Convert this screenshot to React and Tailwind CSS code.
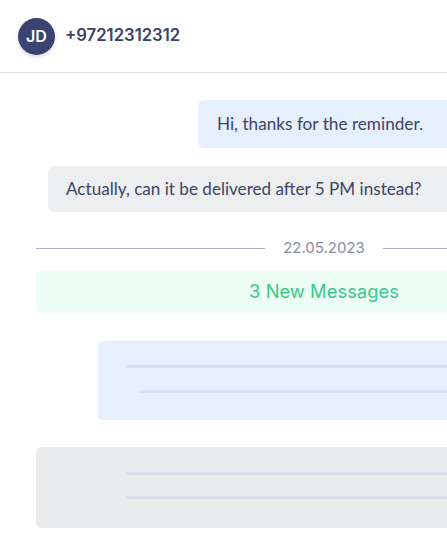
export default function App() {
  return (
    <div className="w-full h-[545px] overflow-hidden bg-white">
      <div className="w-[648px]">
        <div className="h-[73px] border-b border-[#dcdde2] flex items-center pl-[18px] gap-[10px]">
          <div className="w-[37px] h-[37px] rounded-full bg-[#3b4373] flex items-center justify-center text-white text-[16px] font-semibold shadow-[0_2px_4px_rgba(0,0,0,0.15)]" style={{ fontFamily: "Inter, sans-serif" }}>
            JD
          </div>
          <div className="text-[16.7px] font-semibold text-[#3b4268]" style={{ fontFamily: "Inter, sans-serif" }}>
            +97212312312
          </div>
        </div>
        <div className="px-[36px] pt-[27px] flex flex-col" style={{ fontFamily: "Lato, sans-serif" }}>
          <div className="ml-[162px] h-[48px] rounded-[6px] bg-[#e6effd] flex items-center pl-[19px] text-[17.2px] text-[#3d4466]">
            Hi, thanks for the reminder.
          </div>
          <div className="mt-[18px] ml-[12px] h-[46px] rounded-[6px] bg-[#eceef0] flex items-center pl-[18px] text-[17.1px] text-[#3d4466]">
            Actually, can it be delivered after 5 PM instead?
          </div>
          <div className="mt-[24px] h-[24px] flex items-center gap-[18px]">
            <div className="flex-1 h-px bg-[#a8acc0]" />
            <div className="text-[15px] text-[#8a8e9a]" style={{ fontFamily: "Inter, sans-serif" }}>22.05.2023</div>
            <div className="flex-1 h-px bg-[#a8acc0]" />
          </div>
          <div className="mt-[11px] h-[42px] rounded-[5px] bg-[#edfcf5] flex items-center justify-center text-[18.4px] text-[#3cc88a]" style={{ fontFamily: "Inter, sans-serif" }}>
            3 New Messages
          </div>
          <div className="mt-[28px] ml-[62px] h-[79px] rounded-[5px] bg-[#e6effd] flex flex-col pt-[24px] gap-[22px]">
            <div className="ml-[28px] h-[3px] bg-[#d9e1f0]" />
            <div className="ml-[42px] h-[3px] bg-[#d9e1f0]" />
          </div>
          <div className="mt-[27px] h-[81px] rounded-[5px] bg-[#ebecee] flex flex-col pt-[25px] gap-[21px]">
            <div className="ml-[90px] h-[3px] bg-[#dcdeec]" />
            <div className="ml-[90px] h-[3px] bg-[#dcdeec]" />
          </div>
        </div>
      </div>
    </div>
  );
}
